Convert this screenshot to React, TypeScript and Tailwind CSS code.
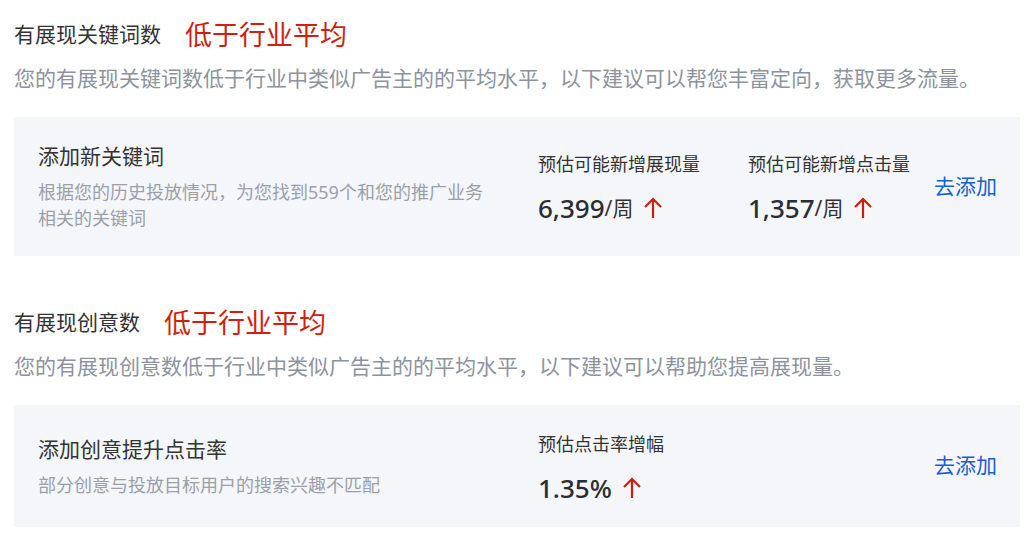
import React from "react";

const font = { fontFamily: '"Noto Sans", "Noto Sans CJK SC", sans-serif' };

function UpArrow() {
  return (
    <svg width="20" height="22" viewBox="0 0 20 22" fill="none" className="ml-[10px]">
      <path d="M10 2 V21" stroke="#cf1d0c" strokeWidth="2.2" />
      <path d="M2 10 L10 2 L18 10" stroke="#cf1d0c" strokeWidth="2.2" />
    </svg>
  );
}

function Metric({ label, value, unit }: { label: string; value: string; unit?: string }) {
  return (
    <div className="flex flex-col">
      <div className="text-[18px] leading-[24px] text-[#333]">{label}</div>
      <div className="mt-[19px] flex items-center h-[26px]">
        <span className="text-[26px] font-medium text-[#2a2d33] leading-none">{value}</span>
        {unit && <span className="text-[21px] text-[#333] leading-none">{unit}</span>}
        <UpArrow />
      </div>
    </div>
  );
}

function Section({
  title,
  desc,
  cardTitle,
  cardDesc,
  metrics,
  cardH,
  top,
}: {
  title: string;
  desc: string;
  cardTitle: string;
  cardDesc: string;
  metrics: { label: string; value: string; unit?: string }[];
  cardH: string;
  top: string;
}) {
  return (
    <section className={top}>
      <div className="flex items-center h-[40px]">
        <span className="text-[21px] text-[#333]">{title}</span>
        <span className="ml-[24px] text-[27px] text-[#d01f0f]">低于行业平均</span>
      </div>
      <p className="mt-[8px] text-[21px] leading-[30px] text-[#8d939e]">{desc}</p>
      <div className={`mt-[24px] mr-[10px] bg-[#f5f6fa] flex items-center pl-[24px] pr-[23px] ${cardH}`}>
        <div className="w-[500px] shrink-0">
          <div className="text-[21px] leading-[28px] text-[#333]">{cardTitle}</div>
          <div className="mt-[9px] w-[455px] text-[18px] leading-[26px] text-[#9aa0a9]">{cardDesc}</div>
        </div>
        {metrics.map((m, i) => (
          <div key={i} className={i < metrics.length - 1 ? "w-[210px] shrink-0" : "shrink-0"}>
            <Metric {...m} />
          </div>
        ))}
        <a className="ml-auto shrink-0 whitespace-nowrap text-[21px] text-[#1560d4] cursor-pointer">去添加</a>
      </div>
    </section>
  );
}

export default function App() {
  return (
    <div className="w-[1030px] h-[549px] bg-white pl-[14px] overflow-hidden" style={font}>
      <Section
        top="pt-[15px]"
        title="有展现关键词数"
        desc="您的有展现关键词数低于行业中类似广告主的的平均水平，以下建议可以帮您丰富定向，获取更多流量。"
        cardTitle="添加新关键词"
        cardDesc="根据您的历史投放情况，为您找到559个和您的推广业务相关的关键词"
        cardH="h-[139px]"
        metrics={[
          { label: "预估可能新增展现量", value: "6,399", unit: "/周" },
          { label: "预估可能新增点击量", value: "1,357", unit: "/周" },
        ]}
      />
      <Section
        top="pt-[47px]"
        title="有展现创意数"
        desc="您的有展现创意数低于行业中类似广告主的的平均水平，以下建议可以帮助您提高展现量。"
        cardTitle="添加创意提升点击率"
        cardDesc="部分创意与投放目标用户的搜索兴趣不匹配"
        cardH="h-[122px]"
        metrics={[{ label: "预估点击率增幅", value: "1.35%" }]}
      />
    </div>
  );
}
